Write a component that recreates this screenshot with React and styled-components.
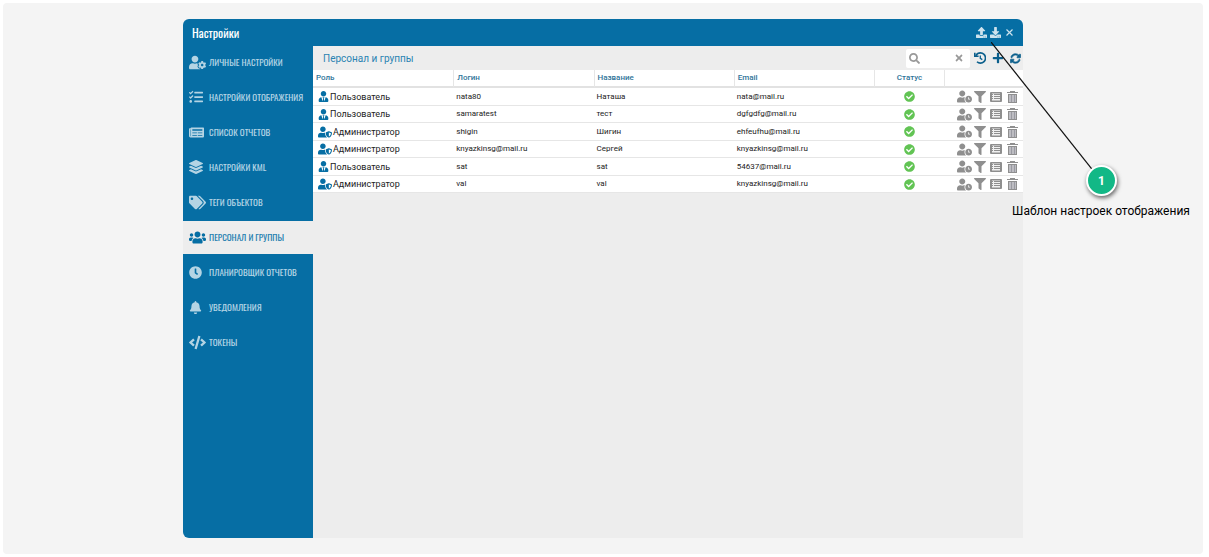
import React from 'react';
import styled, { createGlobalStyle } from 'styled-components';
import {
  FaBell,
  FaCheckCircle,
  FaClock,
  FaCode,
  FaDownload,
  FaFilter,
  FaLayerGroup,
  FaNewspaper,
  FaPlus,
  FaSearch,
  FaTags,
  FaTasks,
  FaTimes,
  FaUpload,
  FaUserClock,
  FaUserCog,
  FaUserShield,
  FaUserTie,
  FaUsers,
} from 'react-icons/fa';
import { FaArrowsRotate } from 'react-icons/fa6';

const GlobalStyle = createGlobalStyle`
  * {
    box-sizing: border-box;
  }

  body {
    margin: 0;
    background: #fff;
    font-family: Roboto, 'Liberation Sans', sans-serif;
  }

  button {
    display: flex;
    align-items: center;
    padding: 0;
    border: 0;
    background: none;
    color: inherit;
    font: inherit;
    cursor: pointer;
  }
`;

const Page = styled.main`
  display: flex;
  justify-content: center;
  min-height: calc(100vh - 6px);
  margin: 3px 6px 3px 3px;
  padding: 16px 0;
  border-radius: 4px;
  background: #f4f4f4;
`;

const Window = styled.section`
  position: relative;
  display: flex;
  flex-direction: column;
  width: 70%;
`;

const TitleBar = styled.header`
  display: flex;
  align-items: center;
  justify-content: space-between;
  height: 27px;
  padding: 0 8px 0 9px;
  border-radius: 6px 6px 0 0;
  background: #066ea4;
  color: #fff;
`;

const Title = styled.h1`
  margin: 0;
  font-family: Oswald, 'Roboto Condensed', sans-serif;
  font-size: 12px;
  font-weight: 400;
`;

const TitleActions = styled.div`
  display: flex;
  gap: 3px;
  color: #cde2ed;
`;

const Body = styled.div`
  display: flex;
  flex: 1;
`;

const Sidebar = styled.nav`
  display: flex;
  flex-direction: column;
  flex: none;
  gap: 2px;
  width: 130px;
  border-radius: 0 0 0 6px;
  background: #066ea4;
`;

const MenuItem = styled.button`
  && {
    gap: 4px;
    height: 33px;
    padding: 0 6px 1px;
    background: ${({ $active }) => ($active ? '#ededed' : 'transparent')};
    color: ${({ $active }) => ($active ? '#2580b0' : '#b4d4e4')};
    font-family: Oswald, 'Roboto Condensed', sans-serif;
    font-size: 9px;
    font-weight: 400;
    text-transform: uppercase;
    white-space: nowrap;
  }
`;

const MenuIcon = styled.span`
  display: flex;
  flex: none;
  width: 16px;
  color: ${({ $active }) => ($active ? '#066ea4' : 'inherit')};

  svg {
    flex: none;
  }
`;

const Content = styled.div`
  flex: 1;
  min-width: 0;
  background: #ededed;
`;

const Toolbar = styled.div`
  display: flex;
  align-items: center;
  height: 24px;
  padding: 0 2px 0 10px;
  color: #0b5f8c;
`;

const Heading = styled.h2`
  flex: 1;
  margin: 0;
  color: #2a83b2;
  font-size: 10px;
  font-weight: 400;
`;

const SearchBox = styled.label`
  display: flex;
  align-items: center;
  width: 64px;
  height: 19px;
  margin-right: 4px;
  padding: 0 6px 0 3px;
  border-radius: 2px;
  background: #fff;
  color: #999;
`;

const SearchInput = styled.input`
  flex: 1;
  min-width: 0;
  padding: 0 2px;
  border: 0;
  outline: 0;
  background: none;
  font-size: 9px;
`;

const ToolbarActions = styled.div`
  display: flex;
  align-items: center;
  gap: 6px;
`;

const Table = styled.table`
  width: 100%;
  border-collapse: separate;
  border-spacing: 0;
  table-layout: fixed;
  background: #fff;
`;

const Column = styled.col`
  width: ${({ $width }) => $width || 'auto'};
`;

const HeadCell = styled.th`
  height: 18px;
  padding: 0 3px;
  border-bottom: 2px solid #e2e2e2;
  border-left: ${({ $ruled }) => ($ruled ? '1px solid #e6e6e6' : '0')};
  color: #2f7499;
  font-size: 8px;
  font-weight: 500;
  line-height: 14px;
  text-align: ${({ $align }) => $align || 'left'};
`;

const Row = styled.tr`
  height: 18px;

  &:nth-child(even) {
    height: 17px;
  }
`;

const Cell = styled.td`
  padding: 0 3px;
  border-bottom: 1px solid #e6e6e6;
  color: #222;
  font-size: 8px;
  line-height: 14px;
  white-space: nowrap;
`;

const Role = styled.div`
  display: flex;
  align-items: center;
  gap: 1px;
  padding-left: 2px;
  font-size: 9px;

  svg {
    color: #066ea4;
  }
`;

const Status = styled.div`
  display: flex;
  justify-content: center;
  color: #62c454;
`;

const RowActions = styled.div`
  display: grid;
  grid-template-columns: 15px repeat(3, 16px);
  justify-content: end;
  color: #8f8f8f;

  button {
    justify-content: center;
  }
`;

const Callout = styled.aside`
  position: absolute;
  top: 23px;
  left: calc(100% - 32px);
  width: 220px;
  pointer-events: none;
`;

const Pointer = styled.svg`
  display: block;
`;

const Badge = styled.span`
  position: absolute;
  top: 123px;
  left: 95px;
  display: grid;
  place-items: center;
  width: 31px;
  height: 31px;
  border: 2px solid #fff;
  border-radius: 50%;
  background: #12b886;
  box-shadow: 1px 2px 4px rgba(0, 0, 0, 0.6);
  color: #fff;
  font-size: 12px;
  font-weight: 700;
`;

const CalloutText = styled.p`
  position: absolute;
  top: 161px;
  left: 0;
  width: 220px;
  margin: 0;
  color: #000;
  font-size: 12px;
  line-height: 16px;
  text-align: center;
  white-space: nowrap;
`;

const TrashIcon = () => (
  <svg width="11" height="12" viewBox="0 0 11 12" aria-hidden="true">
    <path d="M0 1h3V0h5v1h3v1H0z" fill="#8f8f8f" />
    <path d="M1 3h9v9H1z" fill="#8f8f8f" />
    <path d="M2 4h7v7H2z" fill="#bdbdc2" />
    <path d="M4 4h1v7H4zM7 4h1v7H7z" fill="#9a9aa2" />
  </svg>
);

const ListIcon = () => (
  <svg width="12" height="10" viewBox="0 0 12 10" aria-hidden="true">
    <rect width="12" height="10" rx="1" fill="#8f8f8f" />
    <path d="M2 1.5h8v7H2z" fill="#f0f0f0" />
    <path d="M2 2.5h1M2 4.5h1M2 6.5h1M4 2.5h6M4 4.5h6M4 6.5h6" stroke="#8f8f8f" />
  </svg>
);

const HistoryIcon = () => (
  <svg width="12" height="12" viewBox="0 0 12 12" fill="none" stroke="currentColor" strokeWidth="1.6" aria-hidden="true">
    <path d="M1.8 3.8C2.8 2 4.6.9 6.4.9a5 5 0 0 1 0 10.2c-1.4 0-2.5-.5-3.4-1.4" />
    <path d="M.8.8v3.4h3.8" />
    <path d="M6.3 3.4v3l2 1.2" strokeWidth="1.3" />
  </svg>
);

const CloseIcon = () => (
  <svg width="11" height="11" viewBox="0 0 11 11" aria-hidden="true">
    <path d="M2.5 2.5l6 6M8.5 2.5l-6 6" stroke="currentColor" strokeWidth="1.2" />
  </svg>
);

const menu = [
  { label: 'Личные настройки', Icon: FaUserCog, size: 17 },
  { label: 'Настройки отображения', Icon: FaTasks, size: 14 },
  { label: 'Список отчетов', Icon: FaNewspaper, size: 15 },
  { label: 'Настройки KML', Icon: FaLayerGroup, size: 14 },
  { label: 'Теги объектов', Icon: FaTags, size: 17 },
  { label: 'Персонал и группы', Icon: FaUsers, size: 17, active: true },
  { label: 'Планировщик отчетов', Icon: FaClock, size: 13 },
  { label: 'Уведомления', Icon: FaBell, size: 13 },
  { label: 'Токены', Icon: FaCode, size: 17 },
];

const users = [
  { login: 'nata80', name: 'Наташа', email: 'nata@mail.ru' },
  { login: 'samaratest', name: 'тест', email: 'dgfgdfg@mail.ru' },
  { login: 'shigin', name: 'Шигин', email: 'ehfeufhu@mail.ru', admin: true },
  { login: 'knyazkinsg@mail.ru', name: 'Сергей', email: 'knyazkinsg@mail.ru', admin: true },
  { login: 'sat', name: 'sat', email: '54637@mail.ru' },
  { login: 'val', name: 'val', email: 'knyazkinsg@mail.ru', admin: true },
];

const UserRow = ({ user }) => {
  const { login, name, email, admin } = user;

  return (
    <Row>
      <Cell>
        <Role>
          {admin ? <FaUserShield size={14} /> : <FaUserTie size={11} />}
          {admin ? 'Администратор' : 'Пользователь'}
        </Role>
      </Cell>
      <Cell>{login}</Cell>
      <Cell>{name}</Cell>
      <Cell>{email}</Cell>
      <Cell>
        <Status>
          <FaCheckCircle size={11} />
        </Status>
      </Cell>
      <Cell>
        <RowActions>
          <button type="button" aria-label="Доступ"><FaUserClock size={15} /></button>
          <button type="button" aria-label="Фильтр"><FaFilter size={12} /></button>
          <button type="button" aria-label="Список"><ListIcon /></button>
          <button type="button" aria-label="Удалить"><TrashIcon /></button>
        </RowActions>
      </Cell>
    </Row>
  );
};

const App = () => (
  <>
    <GlobalStyle />
    <Page>
      <Window>
        <TitleBar>
          <Title>Настройки</Title>
          <TitleActions>
            <button type="button" aria-label="Выгрузить"><FaUpload size={11} /></button>
            <button type="button" aria-label="Загрузить"><FaDownload size={11} /></button>
            <button type="button" aria-label="Закрыть"><CloseIcon /></button>
          </TitleActions>
        </TitleBar>
        <Body>
          <Sidebar>
            {menu.map(({ label, Icon, size, active }) => (
              <MenuItem key={label} type="button" $active={active}>
                <MenuIcon $active={active}><Icon size={size} /></MenuIcon>
                {label}
              </MenuItem>
            ))}
          </Sidebar>
          <Content>
            <Toolbar>
              <Heading>Персонал и группы</Heading>
              <SearchBox>
                <FaSearch size={11} />
                <SearchInput type="text" aria-label="Поиск" />
                <button type="button" aria-label="Очистить"><FaTimes size={10} /></button>
              </SearchBox>
              <ToolbarActions>
                <button type="button" aria-label="История"><HistoryIcon /></button>
                <button type="button" aria-label="Добавить"><FaPlus size={12} /></button>
                <button type="button" aria-label="Обновить">
                  <FaArrowsRotate size={11} stroke="currentColor" strokeWidth={30} />
                </button>
              </ToolbarActions>
            </Toolbar>
            <Table>
              <colgroup>
                <Column />
                <Column />
                <Column />
                <Column />
                <Column $width="70px" />
                <Column $width="79px" />
              </colgroup>
              <thead>
                <tr>
                  <HeadCell>Роль</HeadCell>
                  <HeadCell $ruled>Логин</HeadCell>
                  <HeadCell $ruled>Название</HeadCell>
                  <HeadCell $ruled>Email</HeadCell>
                  <HeadCell $ruled $align="center">Статус</HeadCell>
                  <HeadCell $ruled aria-label="Действия" />
                </tr>
              </thead>
              <tbody>
                {users.map((user) => (
                  <UserRow key={user.login} user={user} />
                ))}
              </tbody>
            </Table>
          </Content>
        </Body>
        <Callout>
          <Pointer width="105" height="129" viewBox="0 0 105 129" aria-hidden="true">
            <path d="M0 0l104 131" stroke="#111" strokeWidth="1.2" />
          </Pointer>
          <Badge>1</Badge>
          <CalloutText>Шаблон настроек отображения</CalloutText>
        </Callout>
      </Window>
    </Page>
  </>
);

export default App;
